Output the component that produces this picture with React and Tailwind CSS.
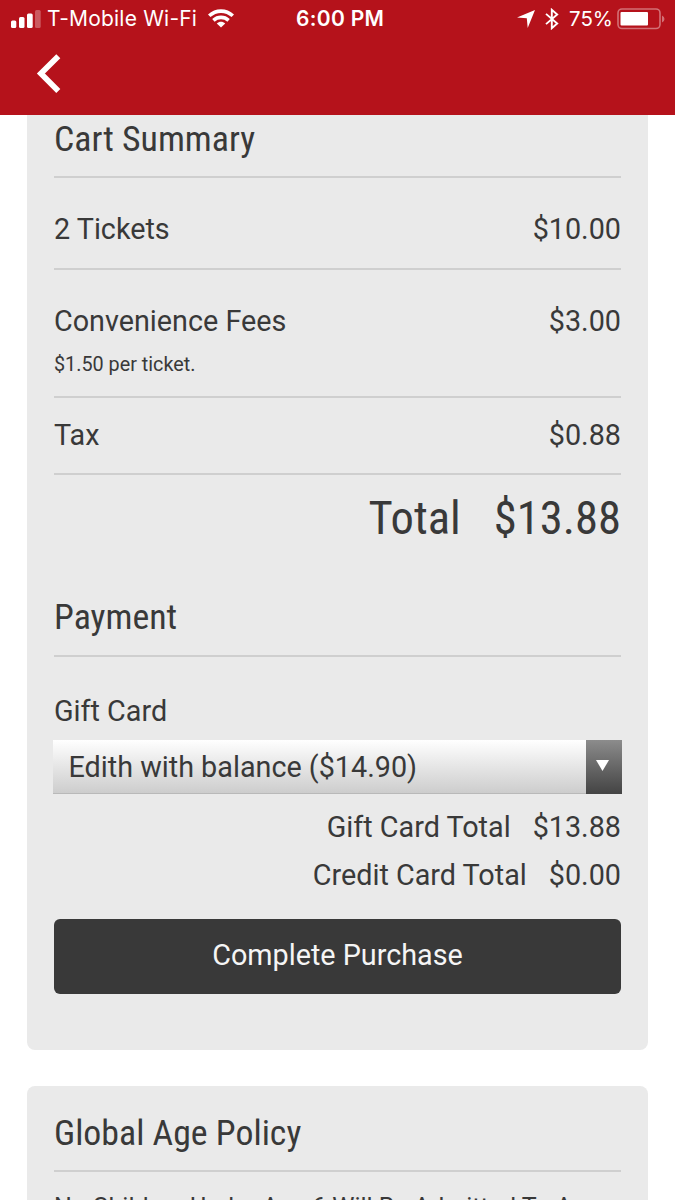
function SectionTitle({ children, className = "" }) {
  return (
    <h2 className={`origin-left whitespace-nowrap font-['Roboto_Condensed','Roboto',sans-serif] text-[35.8px] leading-[42px] [font-stretch:75%] ${className}`}>
      {children}
    </h2>
  );
}

function StatusBar() {
  return (
    <div className="flex h-[37px] items-center text-white font-['Inter',sans-serif]">
      <svg className="ml-[11px]" width="30" height="18" viewBox="0 0 30 18" fill="#fff">
        <rect x="0" y="10.5" width="5.3" height="7.5" rx="1.5" />
        <rect x="8" y="7" width="5.5" height="11" rx="1.5" />
        <rect x="16" y="3.5" width="5.7" height="14.5" rx="1.5" />
        <rect x="24" y="0" width="5.7" height="18" rx="1.5" opacity="0.3" />
      </svg>
      <span className="ml-[6px] w-[152px] whitespace-nowrap text-[21px] leading-[24px] tracking-[0.2px]">T-Mobile Wi-Fi</span>
      <svg className="ml-[9px]" width="26" height="19" viewBox="0 0 26 19" fill="none" stroke="#fff" strokeWidth="3.6">
        <path d="M1.2 6.8 C8 0.5 18 0.5 24.8 6.8" />
        <path d="M5.4 11.3 C9.8 7.4 16.2 7.4 20.6 11.3" />
        <path d="M8.8 14.4 C11.3 12.3 14.7 12.3 17.2 14.4 L13 18.6Z" fill="#fff" stroke="none" />
      </svg>
      <span className="ml-[62px] w-[89px] whitespace-nowrap text-[21px] font-semibold leading-[24px] tracking-[0.3px]">6:00 PM</span>
      <svg className="ml-[132px]" width="18" height="18" viewBox="0 0 18 18" fill="#fff">
        <path d="M18 0 L10.7 18 L9.8 8.3 L0 7.4Z" />
      </svg>
      <svg className="ml-[10px]" width="14" height="22" viewBox="0 0 14 22" fill="none" stroke="#fff" strokeWidth="1.9">
        <path d="M1 5.9 L12.2 15.5 L6.8 20.2 V1.8 L12.2 6.5 L1 16.1" />
      </svg>
      <span className="ml-[10px] w-[43px] whitespace-nowrap text-[20.5px] leading-[24px]">75%</span>
      <svg className="ml-[5px]" width="48" height="22" viewBox="0 0 48 22">
        <rect x="1" y="1" width="42" height="19.5" rx="4" fill="none" stroke="#fff" strokeOpacity="0.4" strokeWidth="1.6" />
        <rect x="3.5" y="3.9" width="27.5" height="13.7" rx="1" fill="#fff" />
        <path d="M45 7.5 Q47.5 8.5 47.5 11 T45 14.5Z" fill="#fff" fillOpacity="0.4" />
      </svg>
    </div>
  );
}

function LineItem({ label, value, className = "" }) {
  return (
    <div className={`flex justify-between leading-[34px] ${className}`}>
      <span>{label}</span>
      <span>{value}</span>
    </div>
  );
}

export default function App() {
  return (
    <div className="flex h-[1200px] w-[675px] flex-col overflow-hidden bg-white font-['Roboto',sans-serif] text-[28.75px] text-[#393939]">
      <header className="h-[115px] shrink-0 bg-[#b5121b]">
        <StatusBar />
        <button className="ml-[36px] mt-[17px] block" aria-label="Back">
          <svg width="26" height="40" viewBox="0 0 26 40" fill="none" stroke="#fff" strokeWidth="5.7">
            <path d="M22.3 2.2 L4.9 19.6 L22.3 37" />
          </svg>
        </button>
      </header>

      <section className="mx-[27px] flex h-[935px] shrink-0 flex-col rounded-b-lg bg-[#eaeaea] px-[27px]">
        <div className="h-[63px] border-b-2 border-[#cfcfcf] pt-[3px]">
          <SectionTitle>Cart Summary</SectionTitle>
        </div>
        <div className="h-[92px] border-b-2 border-[#cfcfcf] pt-[34px]">
          <LineItem label="2 Tickets" value="$10.00" />
        </div>
        <div className="h-[128px] border-b-2 border-[#cfcfcf] pt-[34px]">
          <LineItem label="Convenience Fees" value="$3.00" />
          <p className="mt-[15px] text-[19.8px] leading-[24px]">$1.50 per ticket.</p>
        </div>
        <div className="h-[77px] border-b-2 border-[#cfcfcf] pt-[20px]">
          <LineItem label="Tax" value="$0.88" />
        </div>
        <div className="flex h-[121px] justify-end gap-[33px] pt-[15px] font-['Roboto_Condensed','Roboto',sans-serif] text-[46.6px] leading-[56px] [font-stretch:75%]">
          <span>Total</span>
          <span>$13.88</span>
        </div>
        <div className="h-[61px] border-b-2 border-[#cfcfcf]">
          <SectionTitle>Payment</SectionTitle>
        </div>
        <p className="mt-[37px] leading-[34px]">Gift Card</p>
        <div className="-mx-px mt-[12px] flex h-[54px] shrink-0">
          <div className="flex-1 border-b border-[#b9b9b9] bg-linear-to-b from-white to-[#cdcdcd] pl-[15.5px] pt-px leading-[53px]">
            Edith with balance ($14.90)
          </div>
          <div className="flex w-[36px] justify-center bg-linear-to-b from-[#8c8c8c] to-[#444] pt-[20px]">
            <svg className="-ml-[3px]" width="13" height="11" viewBox="0 0 13 11" fill="#fff">
              <path d="M0 0H13L6.5 11Z" />
            </svg>
          </div>
        </div>
        <div className="mt-[16px] flex justify-end gap-[22px] leading-[34px]">
          <span>Gift Card Total</span>
          <span>$13.88</span>
        </div>
        <div className="mt-[14px] flex justify-end gap-[22px] leading-[34px]">
          <span>Credit Card Total</span>
          <span>$0.00</span>
        </div>
        <button className="mt-[27px] h-[75px] shrink-0 rounded-md bg-[#393939] pb-px text-[#f5f5f5]">
          Complete Purchase
        </button>
      </section>

      <section className="mx-[27px] mt-[36px] h-[200px] shrink-0 rounded-t-lg bg-[#eaeaea] px-[27px]">
        <div className="h-[86px] border-b-2 border-[#cfcfcf] pt-[26px]">
          <SectionTitle>Global Age Policy</SectionTitle>
        </div>
        <p className="mt-[19px] whitespace-nowrap text-[25px] leading-[34px]">No Children Under Age 6 Will Be Admitted To A</p>
      </section>
    </div>
  );
}
